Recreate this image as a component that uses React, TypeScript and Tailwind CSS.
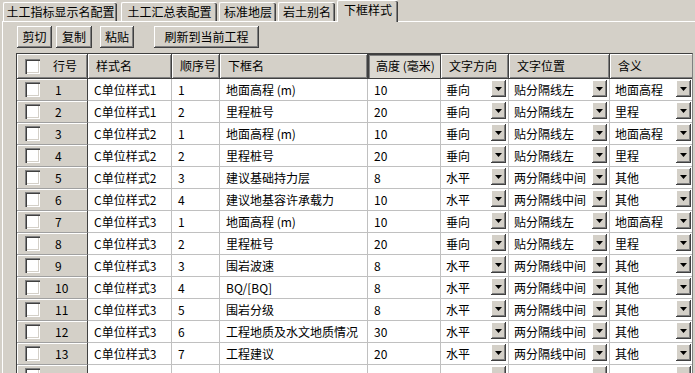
import React from "react";

const rows: string[][] = [
  ["1", "C单位样式1", "1", "地面高程 (m)", "10", "垂向", "贴分隔线左", "地面高程"],
  ["2", "C单位样式1", "2", "里程桩号", "20", "垂向", "贴分隔线左", "里程"],
  ["3", "C单位样式2", "1", "地面高程 (m)", "10", "垂向", "贴分隔线左", "地面高程"],
  ["4", "C单位样式2", "2", "里程桩号", "20", "垂向", "贴分隔线左", "里程"],
  ["5", "C单位样式2", "3", "建议基础持力层", "8", "水平", "两分隔线中间", "其他"],
  ["6", "C单位样式2", "4", "建议地基容许承载力", "10", "水平", "两分隔线中间", "其他"],
  ["7", "C单位样式3", "1", "地面高程 (m)", "10", "垂向", "贴分隔线左", "地面高程"],
  ["8", "C单位样式3", "2", "里程桩号", "20", "垂向", "贴分隔线左", "里程"],
  ["9", "C单位样式3", "3", "围岩波速", "8", "水平", "两分隔线中间", "其他"],
  ["10", "C单位样式3", "4", "BQ/[BQ]", "8", "水平", "两分隔线中间", "其他"],
  ["11", "C单位样式3", "5", "围岩分级", "8", "水平", "两分隔线中间", "其他"],
  ["12", "C单位样式3", "6", "工程地质及水文地质情况", "30", "水平", "两分隔线中间", "其他"],
  ["13", "C单位样式3", "7", "工程建议", "20", "水平", "两分隔线中间", "其他"],
  ["", "", "", "", "", "", "", ""],
];

const cols = "grid-cols-[71px_84px_48px_148px_73px_68px_101px_84px]";

const raised =
  "shadow-[inset_-1px_-1px_0_#404040,inset_1px_1px_0_#ffffff,inset_-2px_-2px_0_#808080]";

function Checkbox() {
  return (
    <span className="block h-[15px] w-[15px] shrink-0 bg-white shadow-[inset_1px_1px_0_#808080,inset_2px_2px_0_#404040,inset_-1px_-1px_0_#ffffff,inset_-2px_-2px_0_#d4d0c8]" />
  );
}

function DropButton() {
  return (
    <span className={`flex h-[17px] w-[15px] shrink-0 items-center justify-center bg-[#d4d0c8] ${raised}`}>
      <svg width="7" height="4" viewBox="0 0 7 4">
        <path d="M0 0H7L3.5 4Z" fill="#000" />
      </svg>
    </span>
  );
}

function Tab({ label, width, active }: { label: string; width: string; active?: boolean }) {
  return (
    <div
      className={`flex items-center justify-center rounded-t-[2px] border-l border-t border-white bg-[#d4d0c8] shadow-[inset_-1px_0_0_#404040,inset_-2px_0_0_#808080] ${width} ${
        active ? "relative z-10 -mb-px h-[22px] pb-[3px]" : "h-[19px]"
      }`}
    >
      {label}
    </div>
  );
}

function ToolButton({ label, width }: { label: string; width: string }) {
  return (
    <div className={`flex h-[22px] items-center justify-center bg-[#d4d0c8] ${raised} ${width}`}>
      {label}
    </div>
  );
}

const headers = ["样式名", "顺序号", "下框名", "高度 (毫米)", "文字方向", "文字位置", "含义"];

export default function App() {
  return (
    <div className="h-[373px] w-[695px] overflow-hidden bg-[#d4d0c8] text-[12px] leading-[14px] text-black [font-family:'Noto_Sans_CJK_SC','Liberation_Sans',sans-serif]">
      {/* TABS */}
      <div className="flex h-[21px] items-end pl-[3px]">
        <Tab label="土工指标显示名配置" width="w-[114px]" />
        <div className="ml-[4px]">
          <Tab label="土工汇总表配置" width="w-[96px]" />
        </div>
        <div className="ml-[2px]">
          <Tab label="标准地层" width="w-[57px]" />
        </div>
        <div className="ml-[2px]">
          <Tab label="岩土别名" width="w-[57px]" />
        </div>
        <div className="ml-[2px]">
          <Tab label="下框样式" width="w-[61px]" active />
        </div>
      </div>

      {/* PANEL */}
      <div className="ml-[2px] h-[352px] border-l border-t border-white">
        {/* toolbar */}
        <div className="flex pl-[14px] pt-[4px]">
          <ToolButton label="剪切" width="w-[35px]" />
          <div className="ml-[4px]">
            <ToolButton label="复制" width="w-[36px]" />
          </div>
          <div className="ml-[8px]">
            <ToolButton label="粘贴" width="w-[34px]" />
          </div>
          <div className="ml-[20px]">
            <ToolButton label="刷新到当前工程" width="w-[105px]" />
          </div>
        </div>

        {/* GRID */}
        <div className="ml-[13px] mt-[5px] w-[677px] overflow-hidden border-l border-r border-t border-l-[#404040] border-r-[#808080] border-t-[#404040]">
          <div className={`grid ${cols} h-[25px]`}>
            <div className="flex items-center border-b border-r border-b-[#404040] border-r-[#404040] pl-[8px] shadow-[inset_1px_1px_0_#ffffff,inset_-1px_-1px_0_#808080]">
              <Checkbox />
              <span className="ml-[13px]">行号</span>
            </div>
            {headers.map((h) => (
              <div
                key={h}
                className={`flex items-center border-b border-r border-b-[#404040] border-r-[#404040] pl-[8px] ${
                  h === "高度 (毫米)"
                    ? "shadow-[inset_1px_1px_0_#404040,inset_2px_2px_0_#808080] bg-[#dcd9d2]"
                    : "shadow-[inset_1px_1px_0_#ffffff,inset_-1px_-1px_0_#808080]"
                }`}
              >
                {h}
              </div>
            ))}
          </div>

          {rows.map((r, i) => (
            <div key={i} className={`grid ${cols} h-[22px]`}>
              <div className="flex items-center border-b border-r border-b-[#a0a0a0] border-r-[#404040] bg-[#d4d0c8] pl-[8px] shadow-[inset_1px_1px_0_#ffffff]">
                <Checkbox />
                <span className="ml-[15px]">{r[0]}</span>
              </div>
              {r.slice(1).map((c, j) => {
                const combo = j >= 4;
                return (
                  <div
                    key={j}
                    className={`flex border-b border-r border-[#c0c0c0] bg-white ${
                      combo ? "items-start justify-between pl-[5px] pr-[2px] pt-[1px]" : "items-center pl-[6px]"
                    }`}
                  >
                    {combo ? (
                      <>
                        <span className="mt-[3px] whitespace-nowrap">{c}</span>
                        <DropButton />
                      </>
                    ) : (
                      <span className="whitespace-nowrap">{c}</span>
                    )}
                  </div>
                );
              })}
            </div>
          ))}
        </div>
      </div>
    </div>
  );
}
